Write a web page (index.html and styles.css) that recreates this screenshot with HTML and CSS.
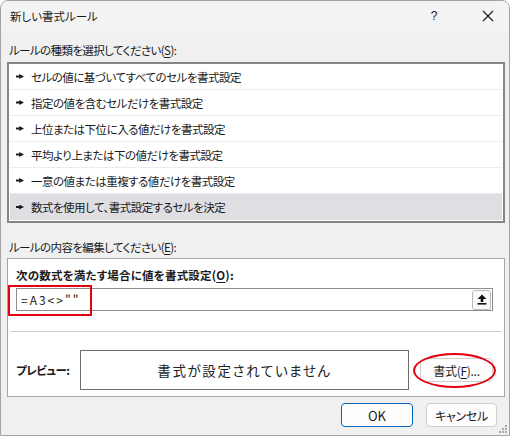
FILE: index.html
```html
<!DOCTYPE html>
<html lang="ja">
<head>
<meta charset="utf-8">
<title>新しい書式ルール</title>
<link rel="stylesheet" href="styles.css">
</head>
<body>
<div class="window">
  <div class="titlebar">
    <span class="title">新しい書式ルール</span>
    <span class="tb-help">?</span>
    <span class="tb-close">
      <svg width="12" height="12" viewBox="0 0 12 12"><path d="M1 1 L11 11 M11 1 L1 11" stroke="#1a1a1a" stroke-width="1.1" fill="none"/></svg>
    </span>
  </div>
  <div class="content">
    <div class="label label-top">ルールの種類を選択してください(<u>S</u>):</div>
    <div class="listbox">
      <div class="item"><span class="arrow"></span>セルの値に基づいてすべてのセルを書式設定</div>
      <div class="item"><span class="arrow"></span>指定の値を含むセルだけを書式設定</div>
      <div class="item"><span class="arrow"></span>上位または下位に入る値だけを書式設定</div>
      <div class="item"><span class="arrow"></span>平均より上または下の値だけを書式設定</div>
      <div class="item"><span class="arrow"></span>一意の値または重複する値だけを書式設定</div>
      <div class="item selected"><span class="arrow"></span>数式を使用して、書式設定するセルを決定</div>
    </div>
    <div class="label label-edit">ルールの内容を編集してください(<u>E</u>):</div>
    <div class="panel">
      <div class="bold-label">次の数式を満たす場合に値を書式設定(<u>O</u>):</div>
      <div class="formula">
        <span class="formula-text">=A3&lt;&gt;""</span>
        <span class="upbtn">
          <svg width="10" height="11" viewBox="0 0 10 11"><path d="M5 0.5 L9.5 5 L6.3 5 L6.3 8 L3.7 8 L3.7 5 L0.5 5 Z" fill="#111"/><rect x="0.5" y="9" width="9" height="1.6" fill="#111"/></svg>
        </span>
      </div>
      <div class="sep"></div>
      <div class="preview-row">
        <span class="bold-label preview-label">プレビュー:</span>
        <div class="preview-box">書式が設定されていません</div>
        <span class="btn fmt-btn">書式(<u>F</u>)...</span>
      </div>
      <div class="red-rect"></div>
      <div class="red-ellipse"></div>
    </div>
    <div class="buttons">
      <span class="btn ok-btn">OK</span>
      <span class="btn cancel-btn">キャンセル</span>
    </div>
  </div>
  <svg class="grip" width="10" height="10" viewBox="0 0 10 10">
    <g fill="#a8a8a8">
      <rect x="7" y="1" width="2" height="2"/>
      <rect x="4" y="4" width="2" height="2"/><rect x="7" y="4" width="2" height="2"/>
      <rect x="1" y="7" width="2" height="2"/><rect x="4" y="7" width="2" height="2"/><rect x="7" y="7" width="2" height="2"/>
    </g>
  </svg>
</div>
</body>
</html>
```
FILE: styles.css
```css
* { box-sizing: border-box; }
html, body {
  margin: 0;
  padding: 0;
  background: #ffffff;
}
body {
  font-family: "Noto Sans CJK JP", "Noto Sans", sans-serif;
  font-feature-settings: "palt";
  font-size: 11.5px;
  letter-spacing: -0.5px;
  color: #1a1a1a;
  width: 512px;
  height: 436px;
  overflow: hidden;
}
u { text-decoration-thickness: 1px; text-underline-offset: 2px; }

.window {
  position: relative;
  width: 510px;
  height: 436px;
  background: #f0f0f0;
  border: 1px solid #a3a3a3;
  border-radius: 8px 8px 0 0;
  overflow: hidden;
}

.titlebar {
  height: 30px;
  background: #f3f3f3;
  display: flex;
  align-items: center;
  padding-left: 9px;
}
.title {
  font-size: 11.5px;
  flex: 1;
  letter-spacing: 0;
}
.tb-help {
  width: 14px;
  text-align: center;
  font-family: "Liberation Sans", sans-serif;
  font-size: 12px;
  letter-spacing: 0;
  margin-right: 41px;
}
.tb-close {
  width: 12px;
  height: 12px;
  display: flex;
  margin-right: 15px;
}

.content {
  padding: 0 3px 0 6px;
}
.label {
  height: 16px;
  line-height: 16px;
  padding-left: 2px;
  letter-spacing: -0.6px;
}
.label-top { margin-top: 11px; margin-bottom: 4px; }

.listbox {
  width: 498px;
  height: 161px;
  background: #fff;
  border: 2px solid #858585;
  padding: 0 1px;
}
.item {
  height: 26px;
  display: flex;
  align-items: center;
  padding-left: 6px;
  border-bottom: 1px solid #ececec;
}
.item.selected {
  background: #dedee3;
  border-bottom: none;
}
.arrow {
  width: 8px;
  height: 5px;
  margin-right: 7px;
  background: #1a1a1a;
  clip-path: polygon(0 30%, 40% 30%, 40% 0, 100% 50%, 40% 100%, 40% 70%, 0 70%);
}

.label-edit { margin-top: 16px; margin-bottom: 3px; }

.panel {
  position: relative;
  width: 498px;
  height: 139px;
  background: #fff;
  border: 1px solid #a6a6a6;
  padding: 8px 11px 0 8px;
}
.bold-label {
  font-weight: bold;
  height: 16px;
  line-height: 16px;
  letter-spacing: 0.2px;
}
.formula {
  margin-top: 5px;
  height: 23px;
  border: 1px solid #8c8c8c;
  display: flex;
  align-items: center;
  padding: 0 1px 0 4px;
}
.formula-text {
  flex: 1;
  letter-spacing: 2px;
  font-size: 12px;
}
.upbtn {
  width: 19px;
  height: 20px;
  border: 1px solid #b9b9b9;
  border-radius: 3px;
  background: #fbfbfb;
  display: flex;
  align-items: center;
  justify-content: center;
}
.sep {
  height: 1px;
  background: #cdcdcd;
  margin: 20px -9px 0 -6px;
}
.preview-row {
  margin-top: 18px;
  display: flex;
  align-items: center;
}
.preview-label { width: 64px; letter-spacing: -0.5px; }
.preview-box {
  width: 329px;
  height: 40px;
  border: 1px solid #6e6e6e;
  display: flex;
  align-items: center;
  justify-content: center;
  font-size: 13.5px;
  letter-spacing: 1.6px;
  color: #222;
}
.btn {
  display: inline-flex;
  align-items: center;
  justify-content: center;
  height: 24px;
  background: #fdfdfd;
  border: 1px solid #d0d0d0;
  border-radius: 4px;
  font-size: 12px;
  letter-spacing: -0.3px;
}
.fmt-btn {
  width: 73px;
  margin-left: 11px;
}

.red-rect {
  position: absolute;
  left: 0;
  top: 26px;
  width: 84px;
  height: 31px;
  border: 2px solid #e4000f;
}
.red-ellipse {
  position: absolute;
  left: 405px;
  top: 94px;
  width: 83px;
  height: 35px;
  border: 2px solid #e4000f;
  border-radius: 50%;
}

.buttons {
  display: flex;
  justify-content: flex-end;
  gap: 13px;
  margin-top: 6px;
  padding-right: 9px;
}
.ok-btn {
  width: 72px;
  height: 24px;
  border: 1px solid #0067c0;
  font-size: 13px;
  letter-spacing: 0;
}
.cancel-btn {
  width: 71px;
  height: 24px;
}

.grip {
  position: absolute;
  right: 1px;
  bottom: 1px;
}
```
